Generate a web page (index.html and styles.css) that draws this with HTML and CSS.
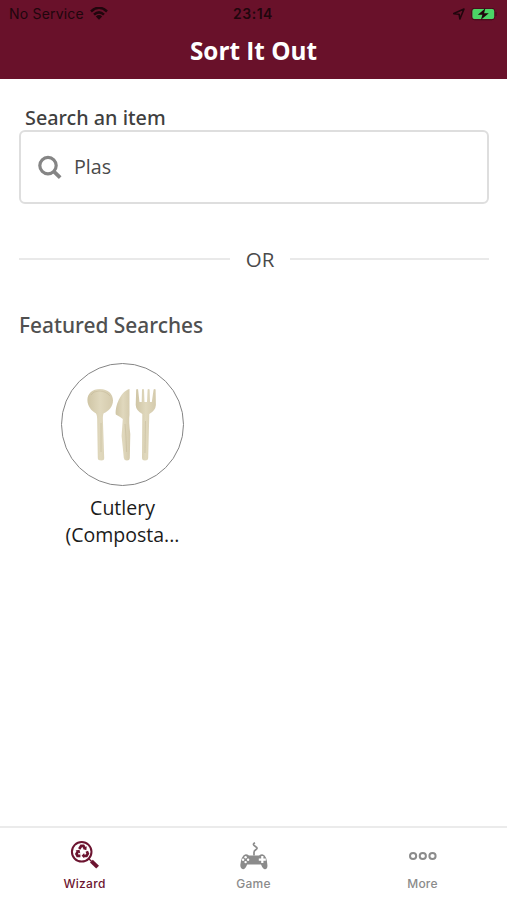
FILE: index.html
```html
<!DOCTYPE html>
<html lang="en">
<head>
<meta charset="utf-8">
<title>Sort It Out</title>
<link rel="stylesheet" href="styles.css">
</head>
<body>
<div class="app">
  <header class="header">
    <div class="status">
      <div class="status-left">
        <span class="carrier">No Service</span>
        <svg class="wifi" width="18" height="14" viewBox="0 0 18 14">
          <path d="M1 4.500Q9-2.900 17 4.500M4 7.700Q9 3.100 14 7.700" fill="none" stroke="currentColor" stroke-width="2.500"/>
          <path d="M5.800 9.500Q9 6.600 12.200 9.500L9 12.700Z" fill="currentColor"/>
        </svg>
      </div>
      <span class="clock">23:14</span>
      <div class="status-right">
        <svg width="12" height="12" viewBox="0 0 12 12"><path d="M.8 5.600 11 1 6.900 11 6.100 6.200Z" fill="none" stroke="currentColor" stroke-width="1.600" stroke-linejoin="round"/></svg>
        <svg width="26" height="13" viewBox="0 0 26 13">
          <rect x=".7" y=".2" width="23" height="11.600" rx="3" fill="none" stroke="#430d1b" stroke-width="1"/>
          <rect x="1.400" y="1.100" width="21.800" height="9.800" rx="2" fill="#4bd666"/>
          <path d="M25 4v4" stroke="#430d1b" stroke-width="1.200"/>
          <path d="M14.400.3 6.800 6.800h4.600l-1.500 4.900 7.900-6.500h-4.700Z" fill="#20060d"/>
        </svg>
      </div>
    </div>
    <h1 class="title">Sort It Out</h1>
  </header>

  <main class="content">
    <label class="label" for="q">Search an item</label>
    <div class="search">
      <svg width="25" height="25" viewBox="0 0 25 25" fill="none" stroke="#858585"><circle cx="10" cy="10.600" r="8.200" stroke-width="3.200"/><path d="m16 16.600 6.200 6" stroke-width="3.800"/></svg>
      <input class="input" id="q" type="text" value="Plas">
    </div>
    <div class="divider"><span>OR</span></div>
    <h2 class="heading">Featured Searches</h2>
    <div class="item">
      <div class="thumb">
        <svg width="121" height="121" viewBox="0 0 121 121">
          <defs>
            <linearGradient id="g"><stop offset="0" stop-color="#cfc5a5"/><stop offset=".5" stop-color="#e0d8bd"/><stop offset="1" stop-color="#d4caac"/></linearGradient>
          </defs>
          <g fill="url(#g)">
            <path d="M38 25c8 0 13 5 13 11.500 0 6-4.500 11-9.300 12.700Q40.500 51 41 59L42.200 94q.1 2.500-2.800 2.500-3.700 0-3.600-2.500L35.200 58q.2-7-1.400-8.800C29.500 47 25.400 42 25.400 36 25.400 29.500 30.500 25 38 25Z"/>
            <path d="M67.500 25V51Q66.600 57 68.300 70L67.800 94q-.2 2.500-2.900 2.500t-3.100-2.500L59.600 72 60.800 55Q57.600 52.500 53.800 50.500C53 42 58.500 27.500 67.500 25Z"/>
            <path d="M74.200 25.500q1-1 1.900 0L77.500 38h2.200L80 25.500q1-1 2 0L82.500 38h2.500L85.600 25.500q1-1 2 0L88 38h1.800L91.600 25.500q1-1 2 0L93.900 41Q93.500 46.500 87.300 50L86.200 94q-.2 2.500-3.200 2.500-2.900 0-3-2.500L80.300 50Q74 46.500 73.700 41Z"/>
          </g>
          <path d="M29 31q2-4 8-4 7 0 11 5M39 59v29M63 60q1 10 1.600 28M83.500 57 83 89" fill="none" stroke="#bcb08f" stroke-width=".8" opacity=".5"/>
        </svg>
      </div>
      <p class="caption">Cutlery<br>(Composta...</p>
    </div>
  </main>

  <nav class="tabs">
    <a class="tab active">
      <svg width="32" height="32" viewBox="0 0 32 32" fill="none" stroke="currentColor">
        <circle cx="12.700" cy="12.800" r="9.800" stroke-width="2"/>
        <path d="m22.400 22.100 6.200 6" stroke-width="4"/><path d="m19.600 19.500 3 3" stroke-width="1.300"/>
        <path d="m10.200 10 2-3.100h2.200l1.600 2.500M17.800 12.300l1 2.300-1.300 2.300h-3M11.400 16.900H8.500l-1-2 1.500-2.800" stroke-width="2.700"/>
        <path d="m17.700 7.300-.3 4-3.700-1.400ZM15.200 14v5.200l-2.600-2.400ZM6.500 11.600l4-.9.800 3.800Z" fill="currentColor" stroke="none"/>
      </svg>
      <span>Wizard</span>
    </a>
    <a class="tab">
      <svg width="32" height="32" viewBox="0 0 32 32">
        <path d="M16 16.500V13.200q0-1.700 2-2.600 2.200-1.400-.2-2.900L16 6.400q-1.500-1.500 1-2.700" fill="none" stroke="currentColor" stroke-width="1.700"/>
        <path d="M7 15.500Q8.500 14.800 11 16.500h10q2.500-1.700 4-1Q28.600 16.500 29.400 26q.3 4-2.400 4.200-2.100 0-4-4.700H9.200q-1.900 4.700-4.100 4.700-2.700-.2-2.800-4.200Q3.500 16.500 7 15.500Z" fill="currentColor"/>
        <g fill="#fff"><circle cx="7.600" cy="18.300" r="1.200"/><circle cx="5.100" cy="20.700" r="1.200"/><circle cx="10.100" cy="20.700" r="1.200"/><circle cx="7.600" cy="23.100" r="1.200"/><path d="M23.200 17.100h2.200v2.400h2.400v2.200h-2.400v2.400h-2.200v-2.400h-2.400v-2.200h2.400Z"/></g>
      </svg>
      <span>Game</span>
    </a>
    <a class="tab">
      <svg width="32" height="32" viewBox="0 0 32 32" fill="none" stroke="currentColor" stroke-width="2"><circle cx="6.100" cy="17" r="3.100"/><circle cx="15.800" cy="17" r="3.100"/><circle cx="25.500" cy="17" r="3.100"/></svg>
      <span>More</span>
    </a>
  </nav>
</div>
</body>
</html>
```
FILE: styles.css
```css
* { box-sizing: border-box; }
body { margin: 0; font-family: "Open Sans", sans-serif; background: #fff; color: #4a4a4a; }
.app { height: 900px; display: flex; flex-direction: column; overflow: hidden; }
.header { height: 79px; background: #69112a; flex: none; }
.status {
  height: 28px; padding: 0 10px 0 9px; color: #20060d;
  display: grid; grid-template-columns: 1fr auto 1fr; align-items: center;
  font: 14px/28px Inter, sans-serif;
}
.status-left, .status-right { display: flex; align-items: center; }
.status-left { gap: 6px; }
.status-right { justify-content: flex-end; gap: 6px; }
.carrier { letter-spacing: .2px; }
.clock { font-weight: 600; letter-spacing: .5px; }
.title { margin: 7px 0 0; text-align: center; color: #fff; font-size: 24.300px; line-height: 32px; font-weight: 700; }
.content { flex: 1; padding: 26px 18px 0 19px; }
.label, .heading { font-family: "Noto Sans", sans-serif; font-weight: 500; }
.label { display: block; padding-left: 6px; font-size: 19.800px; line-height: 25px; color: #3f3f3f; }
.search {
  height: 74px; border: 2px solid #dedede; border-radius: 6px;
  display: flex; align-items: center; padding: 0 16px 0 17px; gap: 11px;
}
.input { flex: 1; min-width: 0; border: 0; outline: 0; padding: 0; background: none; color: #4a4a4a; font: 19.700px/26px "Open Sans", sans-serif; }
.divider { display: grid; grid-template-columns: 211px auto 199px; justify-content: space-between; align-items: center; margin-top: 41px; height: 28px; font-size: 20.500px; line-height: 26px; }
.divider::before, .divider::after { content: ""; height: 2px; background: #e9e9e9; }
.heading { margin: 38px 0 0; font-size: 20.900px; line-height: 28px; color: #505050; }
.item { width: 207px; margin-top: 24px; display: flex; flex-direction: column; align-items: center; }
.thumb { width: 123px; height: 123px; border: 1px solid #858585; border-radius: 50%; overflow: hidden; }
.thumb svg { display: block; }
.caption { margin: 9px 0 0; text-align: center; color: #1b1b1b; font-size: 19.500px; line-height: 26.500px; }
.tabs { height: 74px; flex: none; border-top: 2px solid #ebebeb; display: grid; grid-template-columns: repeat(3, 1fr); }
.tab { display: flex; flex-direction: column; align-items: center; padding-top: 11px; color: #8b8b8b; font: 500 12px/16px Inter, sans-serif; letter-spacing: .2px; }
.tab span { margin-top: 5px; }
.active { color: #6c1430; letter-spacing: .3px; }
```
